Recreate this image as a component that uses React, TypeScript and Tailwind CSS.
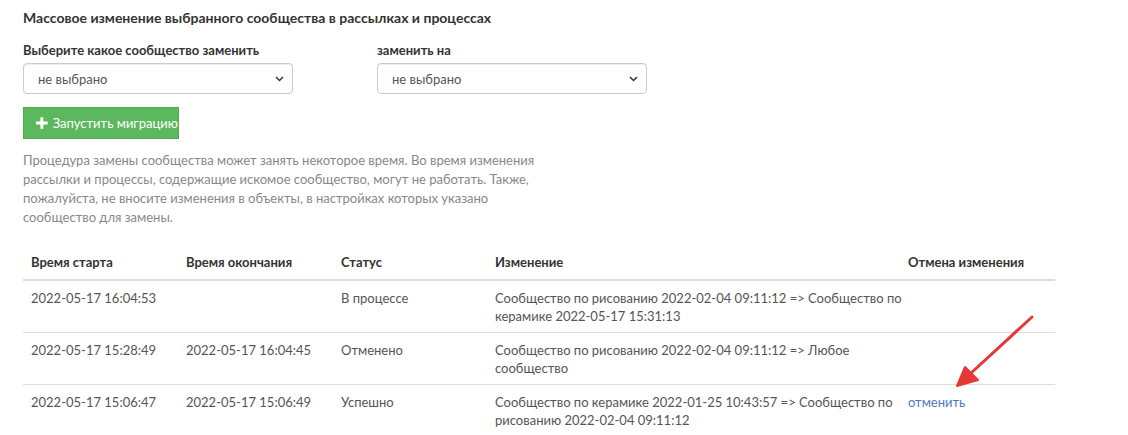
import React from "react";

const rows = [
  {
    start: "2022-05-17 16:04:53",
    end: "",
    status: "В процессе",
    change: "Сообщество по рисованию 2022-02-04 09:11:12 => Сообщество по керамике 2022-05-17 15:31:13",
    cancel: false,
  },
  {
    start: "2022-05-17 15:28:49",
    end: "2022-05-17 16:04:45",
    status: "Отменено",
    change: "Сообщество по рисованию 2022-02-04 09:11:12 => Любое сообщество",
    cancel: false,
  },
  {
    start: "2022-05-17 15:06:47",
    end: "2022-05-17 15:06:49",
    status: "Успешно",
    change: "Сообщество по керамике 2022-01-25 10:43:57 => Сообщество по рисованию 2022-02-04 09:11:12",
    cancel: true,
  },
];

function Select() {
  return (
    <div className="relative w-[270px] h-[31px] rounded-[4px] border border-[#ccc] bg-white shadow-[inset_0_1px_1px_rgba(0,0,0,0.075)] flex items-center pl-[14px] text-[#555]">
      <span>не выбрано</span>
      <svg className="absolute right-[8px] top-[12px]" width="9" height="6" viewBox="0 0 9 6">
        <path d="M1 1l3.5 3.5L8 1" fill="none" stroke="#333" strokeWidth="1.5" />
      </svg>
    </div>
  );
}

export default function App() {
  return (
    <div className="relative bg-white w-[1128px] h-[435px] overflow-hidden pl-[23px] pt-[9px] text-[13px] leading-[18px] text-[#555] font-['Lato',sans-serif]">
      <h3 className="font-bold text-[#333] text-[14px] leading-[18px]">
        Массовое изменение выбранного сообщества в рассылках и процессах
      </h3>

      <div className="flex gap-[84px] mt-[14px]">
        <div>
          <label className="block font-bold text-[#333] mb-[4px]">Выберите какое сообщество заменить</label>
          <Select />
        </div>
        <div>
          <label className="block font-bold text-[#333] mb-[4px]">заменить на</label>
          <Select />
        </div>
      </div>

      <button className="mt-[13px] flex items-center gap-[5px] h-[32px] w-[156px] pl-[12px] bg-[#5cb85c] border border-[#4cae4c] text-white whitespace-nowrap">
        <svg width="12" height="12" viewBox="0 0 12 12">
          <path d="M4.5 0h3v4.5H12v3H7.5V12h-3V7.5H0v-3h4.5z" fill="#fff" />
        </svg>
        <span>Запустить миграцию</span>
      </button>

      <p className="mt-[12px] w-[520px] leading-[19px] text-[#888]">
        Процедура замены сообщества может занять некоторое время. Во время изменения рассылки и процессы,
        содержащие искомое сообщество, могут не работать. Также, пожалуйста, не вносите изменения в объекты,
        в настройках которых указано сообщество для замены.
      </p>

      <table className="mt-[18px] w-[1032px] table-fixed border-collapse leading-[18px]">
        <thead>
          <tr className="border-b-2 border-[#ddd] text-left text-[#333]">
            <th className="font-bold w-[155px] px-[8px] py-[8px]">Время старта</th>
            <th className="font-bold w-[155px] px-[8px] py-[8px]">Время окончания</th>
            <th className="font-bold w-[154px] px-[8px] py-[8px]">Статус</th>
            <th className="font-bold w-[417px] pl-[8px] py-[8px]">Изменение</th>
            <th className="font-bold pl-[4px] pr-[8px] py-[8px]">Отмена изменения</th>
          </tr>
        </thead>
        <tbody>
          {rows.map((r) => (
            <tr key={r.start} className="border-t border-[#ddd] align-top first:border-t-0">
              <td className="px-[8px] pt-[8px] pb-[7px]">{r.start}</td>
              <td className="px-[8px] pt-[8px] pb-[7px]">{r.end}</td>
              <td className="px-[8px] pt-[8px] pb-[7px]">{r.status}</td>
              <td className="pl-[8px] pt-[8px] pb-[7px]">{r.change}</td>
              <td className="pl-[4px] pr-[8px] pt-[8px] pb-[7px]">
                {r.cancel && <a className="text-[#4a7bbf]">отменить</a>}
              </td>
            </tr>
          ))}
        </tbody>
      </table>

      {/* red annotation arrow */}
      <svg className="absolute left-[950px] top-[312px]" width="90" height="80" viewBox="0 0 90 80">
        <line x1="82" y1="5" x2="20" y2="62" stroke="#e53935" strokeWidth="3" strokeLinecap="round" />
        <path d="M7 74L15 55L28 68Z" fill="#e53935" stroke="#e53935" strokeWidth="2" strokeLinejoin="round" />
      </svg>
    </div>
  );
}
